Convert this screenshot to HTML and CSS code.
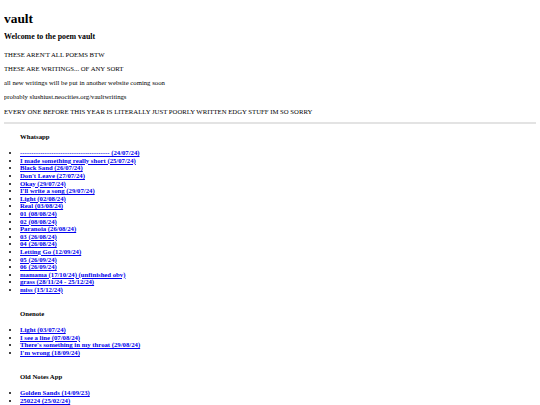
FILE: index.html
```html
<!DOCTYPE html>
<html>
<head>
<meta charset="utf-8">
<title>vault</title>
<link rel="stylesheet" href="styles.css">
</head>
<body>
<h1>vault</h1>
<h3>Welcome to the poem vault</h3>
<p>THESE AREN'T ALL POEMS BTW</p>
<p>THESE ARE WRITINGS... OF ANY SORT</p>
<p>all new writings will be put in another website coming soon</p>
<p>probably slushiust.neocities.org/vaultwritings</p>
<p>EVERY ONE BEFORE THIS YEAR IS LITERALLY JUST POORLY WRITTEN EDGY STUFF IM SO SORRY</p>
<hr>
<div class="section">
<h4>Whatsapp</h4>
<ul>
<li><a href="#">---------------------------------------- (24/07/24)</a></li>
<li><a href="#">I made something really short (25/07/24)</a></li>
<li><a href="#">Black Sand (26/07/24)</a></li>
<li><a href="#">Don't Leave (27/07/24)</a></li>
<li><a href="#">Okay (29/07/24)</a></li>
<li><a href="#">I'll write a song (29/07/24)</a></li>
<li><a href="#">Light (02/08/24)</a></li>
<li><a href="#">Real (03/08/24)</a></li>
<li><a href="#">01 (08/08/24)</a></li>
<li><a href="#">02 (08/08/24)</a></li>
<li><a href="#">Paranoia (26/08/24)</a></li>
<li><a href="#">03 (26/08/24)</a></li>
<li><a href="#">04 (26/08/24)</a></li>
<li><a href="#">Letting Go (12/09/24)</a></li>
<li><a href="#">05 (26/09/24)</a></li>
<li><a href="#">06 (26/09/24)</a></li>
<li><a href="#">mamama (17/10/24) (unfinished obv)</a></li>
<li><a href="#">grass (28/11/24 - 25/12/24)</a></li>
<li><a href="#">miss (15/12/24)</a></li>
</ul>
</div>
<div class="section">
<h4>Onenote</h4>
<ul>
<li><a href="#">Light (03/07/24)</a></li>
<li><a href="#">I see a line (07/08/24)</a></li>
<li><a href="#">There's something in my throat (29/08/24)</a></li>
<li><a href="#">I'm wrong (18/09/24)</a></li>
</ul>
</div>
<div class="section">
<h4>Old Notes App</h4>
<ul>
<li><a href="#">Golden Sands (14/09/23)</a></li>
<li><a href="#">250224 (25/02/24)</a></li>
</ul>
</div>
</body>
</html>
```

FILE: styles.css
```css
html {
  background: #ffffff;
}

body {
  margin: 4px;
  font-family: "Liberation Serif", "Times New Roman", serif;
  font-size: 6.72px;
  line-height: 7.6px;
  color: #000000;
}

h1 {
  font-size: 13.4px;
  line-height: 15.5px;
  margin: 7px 0 5px;
}

h3 {
  font-size: 7.9px;
  line-height: 9px;
  margin: 5px 0 10.2px;
}

p {
  margin: 6.65px 0;
}

hr {
  border: none;
  border-top: 2px solid #e3e3e3;
  margin: 6.65px 0 0;
}

.section {
  margin-left: 16px;
}

.section h4 {
  font-size: 6.72px;
  margin: 8.9px 0;
}

.section ul {
  margin: 8.9px 0 16.25px;
  padding-left: 0;
  list-style: disc outside;
}

.section a {
  color: #0000ee;
  font-weight: bold;
  text-decoration: underline;
}
```
